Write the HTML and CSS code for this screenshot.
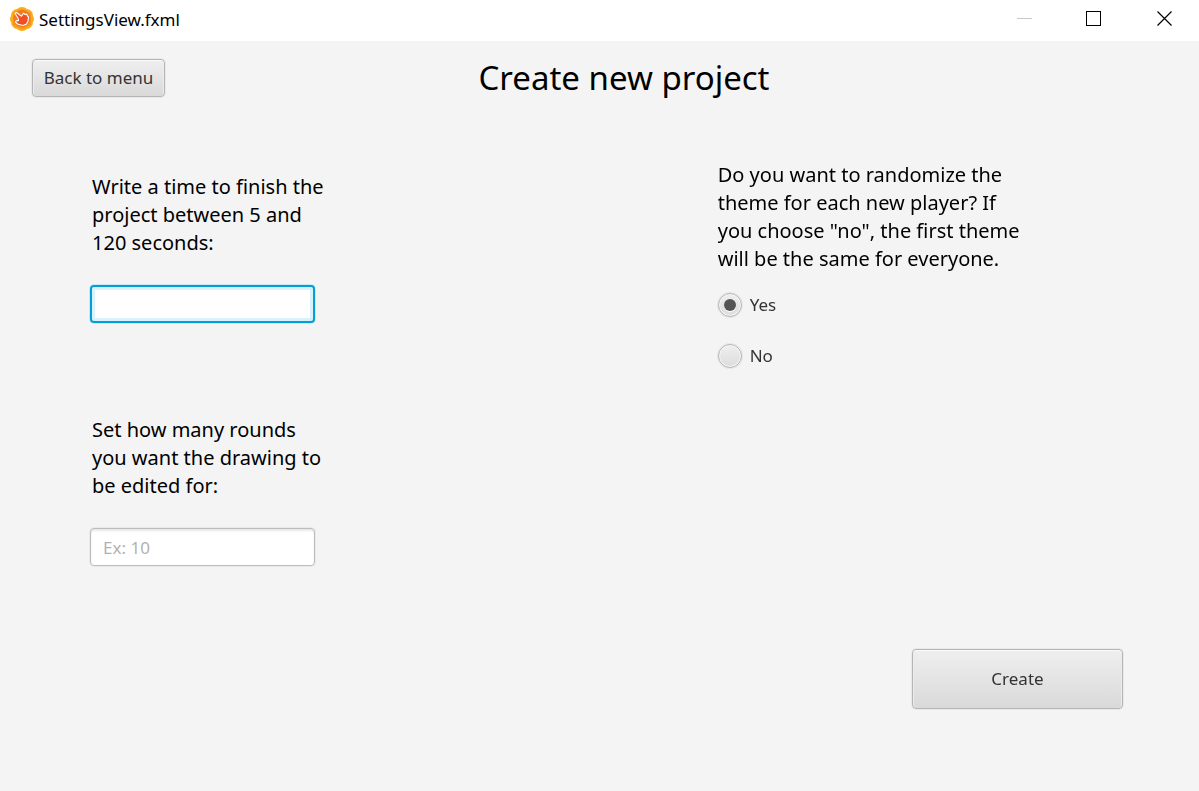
FILE: index.html
```html
<!DOCTYPE html>
<html lang="en">
<head>
<meta charset="utf-8">
<meta name="viewport" content="width=device-width, initial-scale=1">
<title>SettingsView.fxml</title>
<link rel="stylesheet" href="styles.css">
</head>
<body>
<div class="titlebar">
  <svg class="app-icon" viewBox="0 0 24 24" aria-hidden="true">
    <path d="M12 0q3 0 5 2 3 0 5 3 1 2 1 4 1 1 1 3t-1 3q0 3-2 5-2 2-4 2-2 2-5 2t-5-2q-2 0-4-2-2-2-2-5-1-1-1-3t1-3q0-2 1-4 2-3 5-3 2-2 5-2z" fill="#fbad18"/>
    <path d="M12 2l5 2 4 2v12l-4 2-5 2-5-2-4-2V6l4-2z" fill="#f7941e"/>
    <circle cx="12" cy="11.500" r="8.500" fill="#f27a21"/>
    <path d="M5 6.500q1-1.500 2.500-.3l4 3 2-3 1.500 1.300 1.500-.5 1 2 1 1-.5 4-1.500 3-3.500 1.500-5.500-1.500-2-2 1-1.500 2 .2-.5-2.700z" fill="#f04e23" stroke="#fff" stroke-width="1.100" stroke-linejoin="round"/>
  </svg>
  <span class="window-name">SettingsView.fxml</span>
  <div class="window-controls">
    <button type="button" class="window-button" aria-label="Minimize" disabled>
      <svg viewBox="0 0 16 16" shape-rendering="crispEdges"><path d="M1 7.500h15" stroke="#c8c8c8"/></svg>
    </button>
    <button type="button" class="window-button" aria-label="Maximize">
      <svg viewBox="0 0 16 16" shape-rendering="crispEdges"><path d="M.5.500h14v14H.5z" fill="none" stroke="#000"/></svg>
    </button>
    <button type="button" class="window-button" aria-label="Close">
      <svg viewBox="0 0 16 16"><path d="M1.500.500l14 14M15.500.500l-14 14" stroke="#000" stroke-width="1.200"/></svg>
    </button>
  </div>
</div>
<header class="header">
  <button type="button" class="button">Back to menu</button>
  <h1 class="title">Create new project</h1>
</header>
<form class="form">
  <div class="column fields">
    <div class="field">
      <label class="prompt" for="time">Write a time to finish the project between 5 and 120 seconds:</label>
      <input class="input" id="time" type="text" autofocus>
    </div>
    <div class="field">
      <label class="prompt" for="rounds">Set how many rounds you want the drawing to be edited for:</label>
      <input class="input" id="rounds" type="text" placeholder="Ex: 10">
    </div>
  </div>
  <fieldset class="column choices">
    <legend class="prompt prompt-wide">Do you want to randomize the theme for each new player? If you choose "no", the first theme will be the same for everyone.</legend>
    <label class="choice"><input class="radio" type="radio" name="randomize" checked>Yes</label>
    <label class="choice"><input class="radio" type="radio" name="randomize">No</label>
  </fieldset>
  <div class="actions">
    <button type="button" class="button button-large">Create</button>
  </div>
</form>
</body>
</html>
```
FILE: styles.css
```css
* { box-sizing: border-box; }

body {
  margin: 0;
  min-height: 100vh;
  background: #f4f4f4;
  color: #000;
  font: 17px/24px "Noto Sans", "Open Sans", sans-serif;
}

button, input { font: inherit; }

.titlebar {
  display: flex;
  align-items: center;
  height: 41px;
  padding: 0 0 4px 10px;
  background: #fff;
}

.app-icon { width: 24px; height: 24px; }

.window-name { padding: 2px 0 0 5px; }

.window-controls { display: flex; margin-left: auto; }

.window-button {
  display: grid;
  place-items: center;
  width: 70px;
  height: 36px;
  padding: 0;
  border: 0;
  background: none;
}

.window-button svg { width: 16px; height: 16px; }

.header {
  display: flex;
  align-items: center;
  padding: 13px 116px 0 32px;
}

.button {
  width: 133px;
  height: 38px;
  padding: 0;
  border: 1px solid #b5b5b5;
  border-radius: 4px;
  background: linear-gradient(#efefef, #d9d9d9);
  box-shadow: inset 0 1px #fbfbfb, inset 1px 0 #ececec, inset -1px 0 #ececec, 0 0 0 1px #e9e9e9;
  color: #333;
}

.title {
  flex: 1;
  margin: 0;
  font-size: 33px;
  font-weight: 400;
  line-height: 48px;
  text-align: center;
}

.form {
  display: grid;
  grid-template-columns: 13fr 10fr;
  column-gap: 2px;
  padding: 59px 0 0 90px;
}

.fields {
  display: grid;
  gap: 93px;
  padding-top: 12px;
}

.field {
  display: grid;
  gap: 28px;
  justify-items: start;
}

.prompt {
  display: block;
  max-width: 240px;
  padding: 0 0 0 2px;
  font-size: 20px;
  line-height: 28px;
}

.prompt-wide {
  max-width: 304px;
  padding: 0;
}

.input {
  width: 225px;
  height: 38px;
  padding: 0 12px;
  border: 1px solid #bcbcbc;
  border-radius: 4px;
  outline: 0;
  background: #fff;
  box-shadow: inset 0 2px 2px #e8e8e8, 0 0 0 1px #eaeaea;
}

.input::placeholder { color: #b2b2b2; opacity: 1; }

.input:focus {
  border: 2px solid #039ed3;
  box-shadow: inset 0 0 0 3px #d9f1fa, 0 0 0 1px #cbe8f2;
  caret-color: transparent;
}

.choices {
  min-width: 0;
  margin: 0;
  padding: 0;
  border: 0;
}

.choice {
  display: flex;
  align-items: center;
  gap: 8px;
  width: max-content;
  margin: 20px 0 27px;
  color: #333;
}

.radio {
  appearance: none;
  display: grid;
  place-items: center;
  width: 24px;
  height: 24px;
  margin: 0;
  border: 1px solid #b5b5b5;
  border-radius: 50%;
  background: linear-gradient(#efefef, #dcdcdc);
  box-shadow: inset 0 0 0 1px #f6f6f6, 0 0 0 1px #e6e6e6;
}

.radio:checked::before {
  width: 12px;
  height: 12px;
  border-radius: 50%;
  background: #555;
  box-shadow: 0 1px #fff;
  content: "";
}

.choice + .choice { margin: 0; }

.actions {
  grid-column: 1 / -1;
  display: flex;
  justify-content: flex-end;
  padding: 83px 76px 0 0;
}

.button-large {
  width: 211px;
  height: 60px;
}
```
